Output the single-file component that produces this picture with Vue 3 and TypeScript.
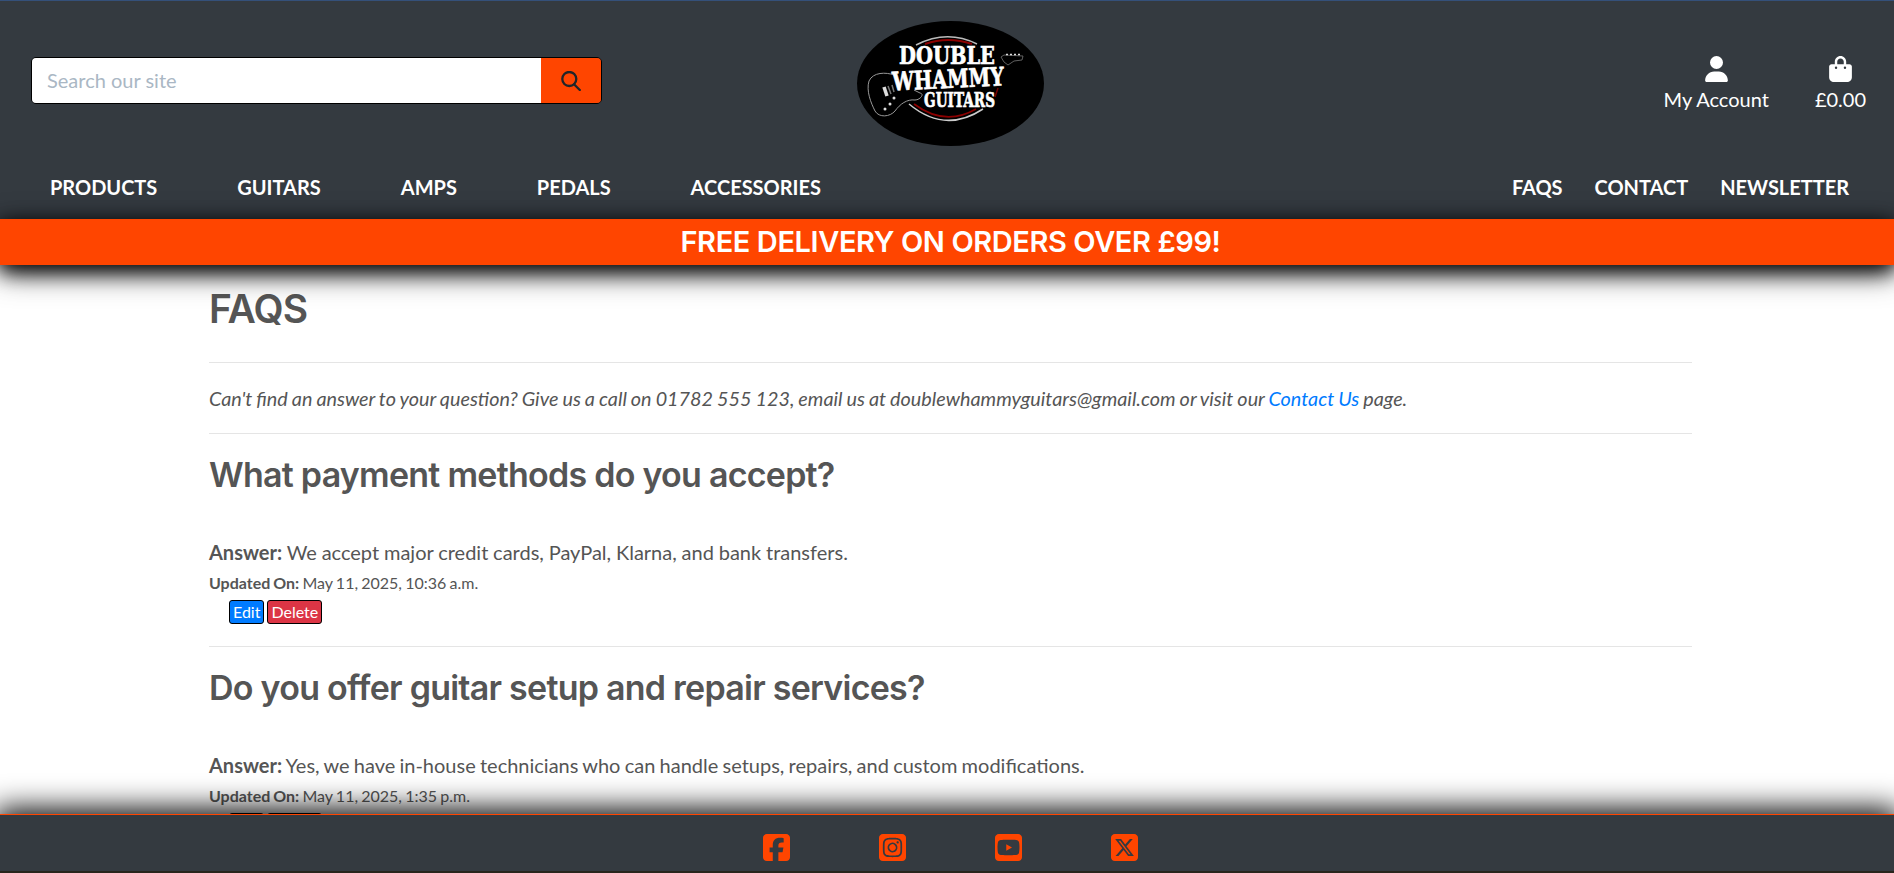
<script setup lang="ts">
interface NavItem { label: string }
interface Faq { question: string; answer: string; updated: string }
interface Social { name: string; path: string }

const leftNav: NavItem[] = ['Products', 'Guitars', 'Amps', 'Pedals', 'Accessories'].map((label) => ({ label }))
const rightNav: NavItem[] = ['FAQs', 'Contact', 'Newsletter'].map((label) => ({ label }))

const faqs: Faq[] = [
  {
    question: 'What payment methods do you accept?',
    answer: 'We accept major credit cards, PayPal, Klarna, and bank transfers.',
    updated: 'May 11, 2025, 10:36 a.m.',
  },
  {
    question: 'Do you offer guitar setup and repair services?',
    answer: 'Yes, we have in-house technicians who can handle setups, repairs, and custom modifications.',
    updated: 'May 11, 2025, 1:35 p.m.',
  },
]

const socials: Social[] = [
  {
    name: 'Facebook',
    path: 'M64 32C28.7 32 0 60.7 0 96V416c0 35.300 28.700 64 64 64h98.200V334.200H109.400V256h52.800V222.300c0-87.100 39.400-127.500 125-127.500c16.200 0 44.200 3.200 55.700 6.400V172c-6-.6-16.500-1-29.600-1c-42 0-58.200 15.900-58.200 57.200V256h83.600l-14.400 78.200H255V480H384c35.300 0 64-28.700 64-64V96c0-35.300-28.700-64-64-64H64z',
  },
  {
    name: 'Instagram',
    path: 'M194.400 211.700a53.300 53.300 0 1 0 59.300 88.700 53.300 53.300 0 1 0-59.300-88.700zm142.300-68.400c-5.200-5.200-11.500-9.300-18.400-12c-18.100-7.100-57.600-6.800-83.100-6.500c-4.100 0-7.900 .1-11.200 .1s-7.200 0-11.400-.1c-25.500-.3-64.800-.7-82.900 6.500c-6.900 2.700-13.100 6.800-18.400 12s-9.300 11.500-12 18.400c-7.100 18.100-6.700 57.700-6.500 83.200c0 4.100 .1 7.900 .1 11.100s0 7-.1 11.100c-.2 25.500-.6 65.100 6.500 83.200c2.700 6.900 6.800 13.100 12 18.400s11.500 9.300 18.400 12c18.100 7.100 57.600 6.800 83.100 6.500c4.100 0 7.900-.1 11.200-.1s7.200 0 11.400 .1c25.500 .3 64.800 .7 82.900-6.500c6.900-2.700 13.100-6.800 18.400-12s9.300-11.500 12-18.400c7.200-18 6.800-57.400 6.500-83c0-4.200-.1-8.100-.1-11.400s0-7.100 .1-11.400c.3-25.500 .7-64.900-6.500-83c-2.700-6.900-6.800-13.100-12-18.400zm-67.100 44.500A82 82 0 1 1 178.400 324.200a82 82 0 1 1 91.100-136.400zm29.200-1.300c-3.100-2.100-5.600-5.100-7.100-8.600s-1.800-7.300-1.100-11.100s2.600-7.100 5.200-9.800s6.100-4.500 9.800-5.200s7.600-.4 11.100 1.100s6.500 3.900 8.600 7s3.200 6.800 3.200 10.600c0 2.500-.5 5-1.400 7.300s-2.400 4.400-4.100 6.200s-3.900 3.200-6.200 4.200s-4.800 1.500-7.300 1.500c-3.800 0-7.500-1.100-10.600-3.200zM448 96c0-35.300-28.700-64-64-64H64C28.700 32 0 60.700 0 96V416c0 35.300 28.700 64 64 64H384c35.300 0 64-28.700 64-64V96zM357 389c-18.700 18.700-41.400 24.600-67 25.900c-26.400 1.500-105.600 1.500-132 0c-25.600-1.300-48.300-7.200-67-25.900s-24.600-41.400-25.800-67c-1.500-26.400-1.500-105.600 0-132c1.300-25.600 7.100-48.300 25.800-67s41.500-24.600 67-25.800c26.400-1.500 105.600-1.500 132 0c25.600 1.300 48.300 7.100 67 25.800s24.600 41.400 25.800 67c1.500 26.300 1.500 105.400 0 131.900c-1.300 25.600-7.100 48.300-25.800 67z',
  },
  {
    name: 'YouTube',
    path: 'M282 256.200l-95.200-54.100V310.300L282 256.200zM384 32H64C28.700 32 0 60.700 0 96V416c0 35.300 28.700 64 64 64H384c35.300 0 64-28.700 64-64V96c0-35.300-28.700-64-64-64zm14.400 136.100c7.600 28.600 7.600 88.200 7.600 88.200s0 59.600-7.600 88.100c-4.200 15.800-16.500 27.700-32.200 31.900C337.900 384 224 384 224 384s-113.900 0-142.200-7.600c-15.700-4.200-28-16.100-32.200-31.900C42 315.900 42 256.300 42 256.300s0-59.700 7.600-88.200c4.200-15.800 16.500-28.200 32.200-32.400C110.100 128 224 128 224 128s113.900 0 142.200 7.700c15.700 4.200 28 16.600 32.200 32.400z',
  },
  {
    name: 'X',
    path: 'M64 32C28.700 32 0 60.700 0 96V416c0 35.300 28.700 64 64 64H384c35.300 0 64-28.700 64-64V96c0-35.300-28.700-64-64-64H64zm297.100 84L257.300 234.600 379.400 396H283.800L209 298.100 123.300 396H75.800l111-126.900L69.700 116h98l67.700 89.500L313.600 116h47.500zM323.300 367.600L153.400 142.900H125.100L296.900 367.600h26.300z',
  },
]
</script>

<template>
  <div class="page">
    <header class="header">
      <div class="top">
        <form class="search" @submit.prevent>
          <input type="text" placeholder="Search our site" />
          <button type="submit" aria-label="Search">
            <svg viewBox="0 0 20 20"><circle cx="8.300" cy="8" r="7" /><path d="M13 13.200L18.800 19" /></svg>
          </button>
        </form>

        <svg class="logo" viewBox="0 0 187 125">
          <ellipse cx="93.500" cy="62.500" rx="93.500" ry="62.500" fill="#000" />
          <g fill="none">
            <path d="M59 24Q90 8 120 23" stroke="#bbb" stroke-width="1.500" />
            <path d="M68 23Q91 15 115 23" stroke="#8b0000" stroke-width="2" />
            <path d="M52 83Q88 113 126 88" stroke="#ccc" stroke-width="1.500" />
            <path d="M57 83Q88 106 119 88" stroke="#8b0000" stroke-width="1.800" />
            <path d="M37 54C29 51 16 51 12 60C9 70 14 82 18 90C22 97 33 96 38 90C43 83 50 78 58 79C63 79 68 73 63 72L57 69" stroke="#999" stroke-width="1" />
            <path d="M144 36L147 34L166 35L165 39L157 40L151 44L147 41Z" stroke="#777" stroke-width=".8" />
            <path d="M149 33.500H165" stroke="#ddd" stroke-width="1.500" stroke-dasharray="2 2" />
            <path d="M138 76L141 67" stroke="#700" stroke-width="1.500" />
            <path d="M27 66L30 75" stroke="#ddd" stroke-width="3.500" />
            <path d="M31 65L34 73M35 64L37 71" stroke="#777" stroke-width="1.500" />
          </g>
          <g fill="#ddd"><circle cx="37" cy="77" r="1.500" /><circle cx="33" cy="83" r="1.500" /><circle cx="28" cy="88" r="1.500" /></g>
          <g class="logo-text">
            <text x="42" y="43" font-size="25" textLength="96" lengthAdjust="spacingAndGlyphs">DOUBLE</text>
            <text x="35" y="67" font-size="25.500" textLength="112" lengthAdjust="spacingAndGlyphs" transform="rotate(-2.700 90 58)">WHAMMY</text>
            <text x="67" y="86" font-size="20.500" textLength="71" lengthAdjust="spacingAndGlyphs">GUITARS</text>
          </g>
        </svg>

        <div class="account">
          <a>
            <svg class="user" viewBox="0 0 448 512"><path d="M224 256A128 128 0 1 0 224 0a128 128 0 1 0 0 256zm-45.700 48C79.800 304 0 383.800 0 482.300C0 498.700 13.300 512 29.700 512H418.300c16.400 0 29.700-13.300 29.700-29.700C448 383.800 368.200 304 269.700 304H178.300z" /></svg>
            <span>My Account</span>
          </a>
          <a>
            <svg class="bag" viewBox="0 0 448 512"><path d="M160 112c0-35.300 28.700-64 64-64s64 28.700 64 64v48H160V112zm-48 48H48c-26.500 0-48 21.500-48 48V416c0 53 43 96 96 96H352c53 0 96-43 96-96V208c0-26.500-21.500-48-48-48H336V112C336 50.100 285.900 0 224 0S112 50.100 112 112v48zm24 48a24 24 0 1 1 0 48 24 24 0 1 1 0-48zm152 24a24 24 0 1 1 48 0 24 24 0 1 1-48 0z" /></svg>
            <span>£0.00</span>
          </a>
        </div>
      </div>
      <nav class="nav">
        <div class="nav-left"><a v-for="item in leftNav" :key="item.label">{{ item.label }}</a></div>
        <div class="nav-right"><a v-for="item in rightNav" :key="item.label">{{ item.label }}</a></div>
      </nav>
    </header>

    <div class="banner"><h4>FREE DELIVERY ON ORDERS OVER £99!</h4></div>

    <main class="content">
      <h1>FAQS</h1>
      <hr />
      <p class="intro">
        Can't find an answer to your question? Give us a call on 01782 555 123, email us at
        doublewhammyguitars@gmail.com or visit our <a>Contact Us</a> page.
      </p>
      <hr />
      <article v-for="faq in faqs" :key="faq.question">
        <h2>{{ faq.question }}</h2>
        <p class="answer"><strong>Answer:</strong> {{ faq.answer }}</p>
        <p class="updated"><strong>Updated On:</strong> {{ faq.updated }}</p>
        <div class="actions"><a class="edit">Edit</a><a class="delete">Delete</a></div>
        <hr />
      </article>
    </main>

    <footer class="footer">
      <a v-for="social in socials" :key="social.name" :aria-label="social.name">
        <svg viewBox="0 32 448 448"><path :d="social.path" fill-rule="evenodd" /></svg>
      </a>
    </footer>
  </div>
</template>

<style>
body { margin: 0; overflow: hidden; }
</style>

<style scoped>
* { box-sizing: border-box; }
.page {
  height: 873px;
  display: flex;
  flex-direction: column;
  overflow: hidden;
  background: #fff;
  color: #555;
  font: 20px/30px Lato, sans-serif;
}
.header {
  flex: none;
  height: 219px;
  background: #343a40;
  border-top: 1px solid #34507a;
  color: #fff;
}
.top {
  display: grid;
  grid-template-columns: 826px 187px 1fr;
  height: 145px;
  padding: 20px 28px 0 31px;
}
.search {
  display: flex;
  width: 571px;
  height: 47px;
  margin-top: 36px;
  border: 1px solid #000;
  border-radius: 5px;
  overflow: hidden;
}
.search input {
  flex: 1;
  min-width: 0;
  border: 0;
  padding: 0 15px 2px;
  font: 20px Lato, sans-serif;
}
.search input::placeholder { color: #aab7c4; opacity: 1; }
.search button {
  width: 60px;
  border: 0;
  padding: 0;
  background: #ff4500;
  display: grid;
  place-items: center;
}
.search svg {
  width: 20px;
  height: 20px;
  fill: none;
  stroke: #212529;
  stroke-width: 2.3;
  stroke-linecap: round;
}
.logo { width: 187px; height: 125px; }
.logo-text {
  font-family: "DejaVu Serif", serif;
  font-weight: 700;
  fill: #fff;
  stroke: #fff;
  stroke-width: .7;
}
.account {
  display: flex;
  justify-content: flex-end;
  gap: 46px;
  padding-top: 35px;
}
.account a { display: flex; flex-direction: column; align-items: center; }
.account svg { height: 26px; width: 23px; fill: #fff; }
.account span { line-height: 30px; margin-top: 2px; }
.nav {
  display: flex;
  justify-content: space-between;
  padding: 26px 45px 0 50px;
  text-transform: uppercase;
  font-weight: 700;
  letter-spacing: -.02px;
}
.nav-left { display: flex; gap: 80px; }
.nav-right { display: flex; gap: 32px; }
.banner {
  flex: none;
  height: 46px;
  padding-left: 7px;
  position: relative;
  background: #ff4500;
  box-shadow: 0 5px 20px #000, 0 8px 30px rgba(0, 0, 0, .7);
  color: #fff;
  text-align: center;
}
h1, h2, h4 { margin: 0; font-family: Inter, sans-serif; font-weight: 600; }
h4 { font-size: 29px; line-height: 46px; letter-spacing: -.4px; }
.content { width: 1483px; margin: 0 0 0 209px; }
h1 { padding-top: 20px; font-size: 39px; line-height: 48px; letter-spacing: -.9px; }
hr { margin: 0; border: 0; border-top: 1px solid #e5e5e5; }
h1 + hr { margin-top: 29px; }
p { margin: 0; }
.intro { padding: 20px 0; font-size: 19.8px; font-style: italic; word-spacing: -.6px; }
.intro a { color: #007bff; }
article { height: 213px; display: flex; flex-direction: column; }
h2 { padding-top: 20px; font-size: 34px; line-height: 42px; letter-spacing: -.75px; }
.answer { margin-top: 41px; word-spacing: -.3px; }
article:last-of-type .answer { word-spacing: -.9px; }
.updated { margin-top: 4px; font-size: 16px; line-height: 24px; word-spacing: -.9px; }
.actions { display: flex; gap: 3px; padding: 5px 0 0 20px; }
.actions a {
  height: 24px;
  padding: 0 3px;
  border: 1px solid #000;
  border-radius: 3px;
  color: #fff;
  font-size: 16px;
  line-height: 22px;
}
.edit { background: #007bff; }
.delete { background: #dc3545; }
article hr { margin-top: auto; }
.footer {
  position: fixed;
  left: 0;
  right: 0;
  bottom: 0;
  height: 59px;
  display: flex;
  justify-content: center;
  gap: 89px;
  padding: 19px 0 0 7px;
  background: #343a40;
  border-top: 1px solid #ff4500;
  border-bottom: 2px solid #28251c;
  box-shadow: 0 0 30px 5px #000;
}
.footer svg { display: block; width: 27px; height: 27px; fill: #ff4500; }
</style>
